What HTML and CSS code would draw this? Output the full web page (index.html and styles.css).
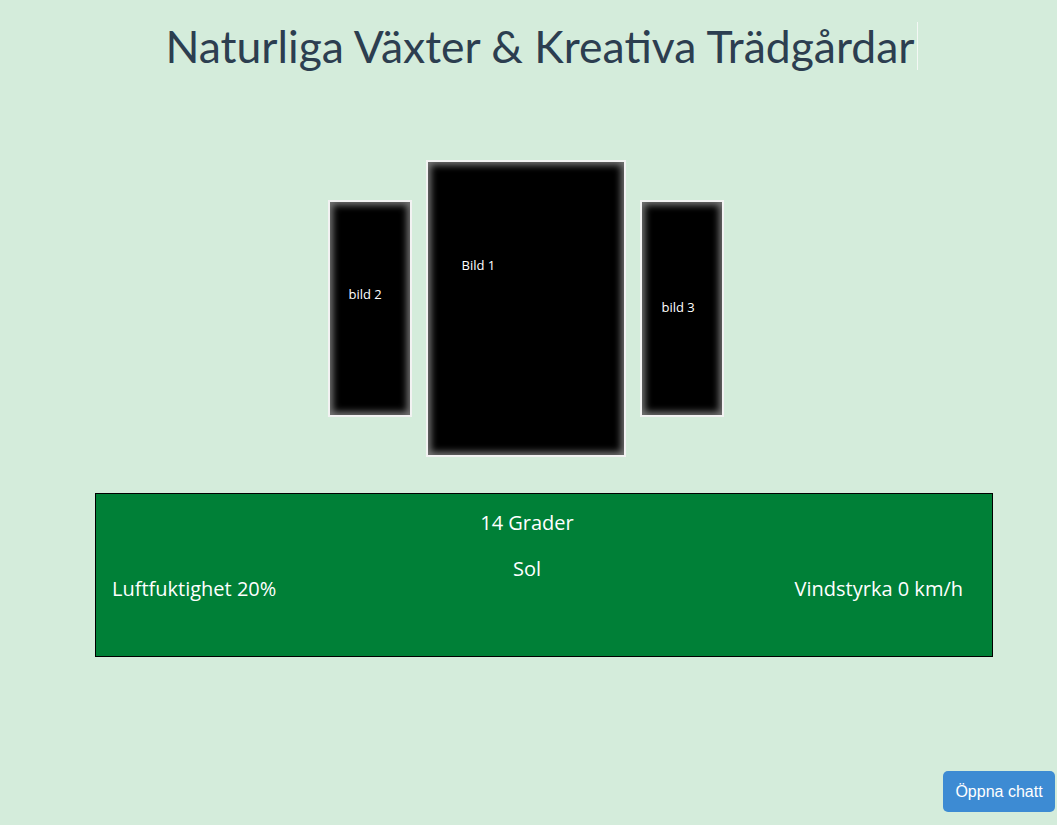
FILE: index.html
```html
<!DOCTYPE html>
<html lang="sv">
<head>
<meta charset="utf-8">
<title>Naturliga Växter &amp; Kreativa Trädgårdar</title>
<link rel="stylesheet" href="styles.css">
</head>
<body>
<header class="header">
  <h1 class="title"><span class="typed">Naturliga Växter &amp; Kreativa Trädgårdar</span></h1>
</header>
<section class="gallery">
  <div class="pic pic-small pic-2"><span>bild 2</span></div>
  <div class="pic pic-big pic-1"><span>Bild 1</span></div>
  <div class="pic pic-small pic-3"><span>bild 3</span></div>
</section>
<section class="weather">
  <div class="w-temp">14 Grader</div>
  <div class="w-hum">Luftfuktighet 20%</div>
  <div class="w-sky">Sol</div>
  <div class="w-wind">Vindstyrka 0 km/h</div>
</section>
<button class="chat-btn">Öppna chatt</button>
</body>
</html>
```
FILE: styles.css
```css
html, body {
  margin: 0;
  padding: 0;
}
body {
  background: #d4ecdb;
  font-family: "Open Sans", sans-serif;
  height: 825px;
  overflow: hidden;
}
.header {
  display: flex;
  justify-content: center;
  padding-top: 22px;
  padding-left: 24px;
}
.title {
  margin: 0;
  font-family: "Lato", sans-serif;
  font-weight: 400;
  font-size: 44.5px;
  line-height: 48px;
  color: #2c3e50;
}
.typed {
  display: inline-block;
  padding-right: 2px;
  border-right: 1px solid #f4f8f5;
  margin-left: 2px;
}
.gallery {
  display: flex;
  justify-content: center;
  align-items: center;
  gap: 14px;
  margin-top: 90px;
  margin-left: -6px;
}
.pic {
  box-sizing: border-box;
  background: #000;
  border: 2px solid #f2f2f2;
  box-shadow: inset 0 0 7px 3px #777;
  color: #fff;
  font-family: "Open Sans", sans-serif;
  font-size: 13px;
}
.pic span {
  display: block;
}
.pic-big {
  width: 200px;
  height: 297px;
  padding: 94px 0 0 34px;
}
.pic-small {
  width: 84px;
  height: 217px;
}
.pic-2 {
  padding: 83px 0 0 19px;
}
.pic-3 {
  padding: 96px 0 0 20px;
}
.weather {
  box-sizing: border-box;
  margin: 36px 64px 0 95px;
  height: 164px;
  background: #008037;
  border: 1px solid #000;
  color: #fff;
  font-size: 20px;
  line-height: 27px;
  display: grid;
  grid-template-columns: 381px 100px 1fr;
  grid-template-rows: auto auto;
  padding-top: 15px;
  row-gap: 19px;
  align-content: start;
}
.w-temp {
  grid-column: 2;
  grid-row: 1;
  text-align: center;
  white-space: nowrap;
}
.w-sky {
  grid-column: 2;
  grid-row: 2;
  text-align: center;
}
.w-hum {
  grid-column: 1;
  grid-row: 2;
  padding-left: 16px;
  margin-top: 20px;
  white-space: nowrap;
}
.w-wind {
  grid-column: 3;
  grid-row: 2;
  text-align: right;
  padding-right: 29px;
  margin-top: 20px;
  white-space: nowrap;
}
.chat-btn {
  position: fixed;
  right: 2px;
  bottom: 13px;
  width: 112px;
  height: 41px;
  border: none;
  border-radius: 5px;
  background: #3d8bd3;
  color: #fff;
  font-family: "Liberation Sans", Arial, sans-serif;
  font-size: 16px;
  padding: 0;
}
```
